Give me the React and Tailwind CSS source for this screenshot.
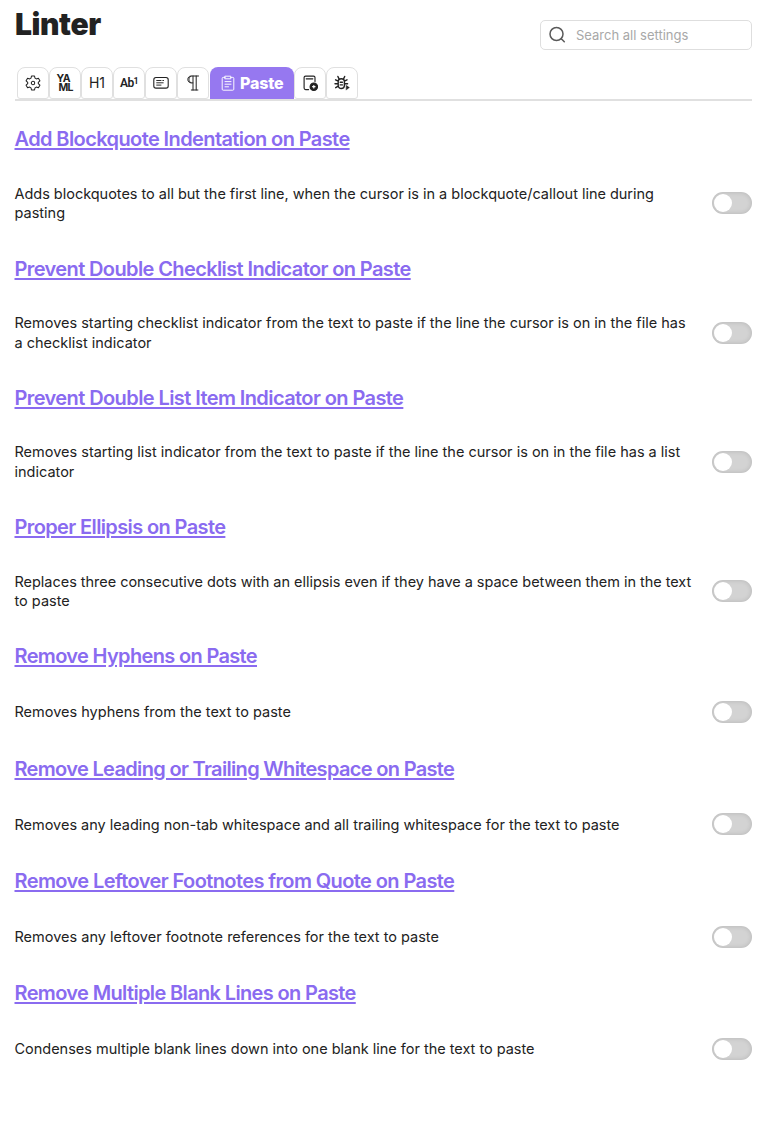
import { useState } from "react";

const rules = [
  { title: "Add Blockquote Indentation on Paste", titleClass: "tracking-[-0.6px]", lines: [["Adds blockquotes to all but the first line, when the cursor is in a blockquote/callout line during", "tracking-[-0.025px]"], ["pasting", "tracking-[0px]"]] },
  { title: "Prevent Double Checklist Indicator on Paste", titleClass: "tracking-[-0.61px]", lines: [["Removes starting checklist indicator from the text to paste if the line the cursor is on in the file has", "tracking-[-0.005px]"], ["a checklist indicator", "tracking-[0px]"]] },
  { title: "Prevent Double List Item Indicator on Paste", titleClass: "tracking-[-0.59px]", lines: [["Removes starting list indicator from the text to paste if the line the cursor is on in the file has a list", "tracking-[0px]"], ["indicator", "tracking-[0px]"]] },
  { title: "Proper Ellipsis on Paste", titleClass: "tracking-[-0.62px]", lines: [["Replaces three consecutive dots with an ellipsis even if they have a space between them in the text", "tracking-[-0.03px]"], ["to paste", "tracking-[0px]"]] },
  { title: "Remove Hyphens on Paste", titleClass: "tracking-[-0.66px]", lines: [["Removes hyphens from the text to paste", "tracking-[0px]"]] },
  { title: "Remove Leading or Trailing Whitespace on Paste", titleClass: "tracking-[-0.67px]", lines: [["Removes any leading non-tab whitespace and all trailing whitespace for the text to paste", "tracking-[-0.02px]"]] },
  { title: "Remove Leftover Footnotes from Quote on Paste", titleClass: "tracking-[-0.6px]", lines: [["Removes any leftover footnote references for the text to paste", "tracking-[0px]"]] },
  { title: "Remove Multiple Blank Lines on Paste", titleClass: "tracking-[-0.64px]", lines: [["Condenses multiple blank lines down into one blank line for the text to paste", "tracking-[-0.013px]"]] },
];

function Toggle({ label }) {
  const [on, setOn] = useState(false);
  return (
    <button
      role="switch"
      aria-checked={on}
      aria-label={label}
      onClick={() => setOn(!on)}
      className={`flex h-[22px] w-10 shrink-0 items-center rounded-full px-[2px] shadow-[inset_0_0_5px_rgba(0,0,0,0.14)] ${on ? "justify-end bg-[#8a6bf0]" : "bg-[#d3d3d3]"}`}
    >
      <span className="size-[18px] rounded-full bg-white" />
    </button>
  );
}

function Svg({ children, className = "size-4", sw = 1.1 }) {
  return (
    <svg viewBox="0 0 16 16" className={`shrink-0 ${className}`} fill="none" stroke="currentColor" strokeWidth={sw} strokeLinecap="round" strokeLinejoin="round">
      {children}
    </svg>
  );
}

const GearIcon = () => (
  <Svg sw={1.05}>
    <path d="M6.500 1h3l.500 2.100 1.300.8 2.100-.7 1.500 2.600-1.600 1.500v1.400l1.600 1.500-1.500 2.600-2.100-.7-1.300.8L9.500 15h-3L6 12.900l-1.300-.8-2.100.7-1.500-2.600 1.600-1.500V7.300L1.100 5.800l1.500-2.600 2.100.7L6 3.100z" />
    <circle cx="8" cy="8" r="1.700" />
  </Svg>
);

const YamlIcon = () => (
  <span className="flex h-[18px] w-[17px] flex-col text-left text-[10.5px] leading-[9px] font-bold tracking-[-0.7px]">
    <span>YA</span>
    <span className="pl-[2px]">ML</span>
  </span>
);

const HeadingIcon = () => <span className="text-[14px] leading-4">H1</span>;

const SpacingIcon = () => (
  <span className="flex items-start font-[Roboto,sans-serif] text-[12px] leading-4 font-semibold tracking-[-0.7px]">
    Ab<span className="text-[9px] leading-[12px] font-semibold">1</span>
  </span>
);

const ContentIcon = () => (
  <Svg sw={1.1}>
    <rect x="0.800" y="2.500" width="14.400" height="10.600" rx="2.200" />
    <path d="M3.700 5.500h4.300M3.700 7.800h6.500M3.700 10.100h4.300M9.800 5.500h.8" strokeWidth="0.950" />
  </Svg>
);

const PilcrowIcon = () => (
  <Svg sw={1}>
    <path d="M13.500 1H6.200C1.700 1 1.700 7.900 6.200 7.900h1.600M8 1v14M11.200 1v14M6.300 15h6.600" />
    <path d="M6 1.300C3.200 2 3.200 7 6 7.600" />
  </Svg>
);

const PasteIcon = () => (
  <Svg sw={0.95}>
    <path d="M5.200 2.400H3.200a1 1 0 0 0-1 1v10.800a1 1 0 0 0 1 1h9.600a1 1 0 0 0 1-1V3.400a1 1 0 0 0-1-1h-2M5.200 1.200h5.600v2.600H5.200zM5 6.600h6M5 9.200h6M5 11.800h3.500" />
  </Svg>
);

const CustomIcon = () => (
  <Svg sw={1.15}>
    <path d="M6.600 14.600H3.600a1.500 1.500 0 0 1-1.500-1.500V2.600a1.500 1.500 0 0 1 1.500-1.500h7.900a1.500 1.500 0 0 1 1.500 1.500v4M4.200 3.800h6.600" />
    <circle cx="11.800" cy="11.700" r="3.700" fill="currentColor" />
    <path d="M11.800 10.500v2.400M10.600 11.700h2.400" stroke="white" strokeWidth="1.200" />
  </Svg>
);

const DebugIcon = () => (
  <Svg sw={1.4}>
    <path d="M4.200 6.200C4.400 3 10.200 3 10.400 6.200v4.300c0 4-6.200 4-6.200 0zM4.800 3.400 3.900 1.500M9.800 3.400l.9-1.900M4.200 6.200 1.600 4.800M4.200 8.700H1M4.200 11.200l-2.500 1.500M10.400 6.200l2.600-1.400M10.400 8.700h3.200M6.200 7.200h2.200M6.200 9.900h2.200" />
    <path d="m12.200 10.300 3.300 2.300-3.300 2.300z" fill="currentColor" strokeWidth=".3" />
  </Svg>
);

const tabs = [
  { name: "General", Icon: GearIcon },
  { name: "YAML", Icon: YamlIcon },
  { name: "Heading", Icon: HeadingIcon },
  { name: "Spacing", Icon: SpacingIcon },
  { name: "Content", Icon: ContentIcon },
  { name: "Footnote", Icon: PilcrowIcon },
  { name: "Paste", Icon: PasteIcon, active: true },
  { name: "Custom", Icon: CustomIcon },
  { name: "Debug", Icon: DebugIcon },
];

export default function App() {
  return (
    <main className="h-[1134px] w-[776px] overflow-hidden bg-white pr-6 pl-[15px] font-['Inter',sans-serif] text-[#222222]">
      <header className="flex h-[67px] items-start justify-between">
        <h1 className="pt-[6px] text-[30px] leading-[36px] font-black tracking-[-0.4px]">Linter</h1>
        <label className="mt-5 flex h-[30px] w-[212px] items-center rounded-[5px] border border-[#dedede] pl-2">
          <svg viewBox="0 0 18 18" className="size-[18px] shrink-0 text-[#5a5a5a]" fill="none" stroke="currentColor" strokeWidth="1.500" strokeLinecap="round">
            <circle cx="7.500" cy="8" r="6.500" />
            <path d="m12.300 12.800 3 3" />
          </svg>
          <input placeholder="Search all settings" className="ml-[9px] w-40 pt-[2px] text-[13px] outline-none placeholder:text-[#a8a8a8]" />
        </label>
      </header>
      <nav className="flex h-[34px] border-b-2 border-[#e0e0e0] pl-[2px]">
        {tabs.map(({ name, Icon, active }) =>
          active ? (
            <button key={name} className="ml-px flex h-8 w-[83.500px] items-center justify-center gap-1 rounded-t-lg bg-[#9678f0] text-[16px] font-extrabold text-white">
              <Icon />
              <span className="tracking-[-0.2px]">{name}</span>
            </button>
          ) : (
            <button key={name} aria-label={name} className="flex h-8 w-8 items-center justify-center rounded-t-lg rounded-b-[3px] border border-[#e0e0e0]">
              <Icon />
            </button>
          )
        )}
      </nav>
      <div className="-ml-[0.5px] pt-[25.3px]">
        {rules.map((rule) => (
          <section key={rule.title} className="pb-[32.8px]">
            <h2 className={`h-[26px] text-[20px] leading-[26px] font-semibold whitespace-nowrap text-[#8a6bf0] ${rule.titleClass}`}>
              <a className="underline decoration-2 underline-offset-2">{rule.title}</a>
            </h2>
            <div className="mt-[31.5px] flex items-center justify-between">
              <p className="text-[14.5px] leading-[19.5px]">
                {rule.lines.map(([text, tracking]) => (
                  <span key={text} className={`block whitespace-nowrap ${tracking}`}>{text}</span>
                ))}
              </p>
              <Toggle label={rule.title} />
            </div>
          </section>
        ))}
      </div>
    </main>
  );
}
